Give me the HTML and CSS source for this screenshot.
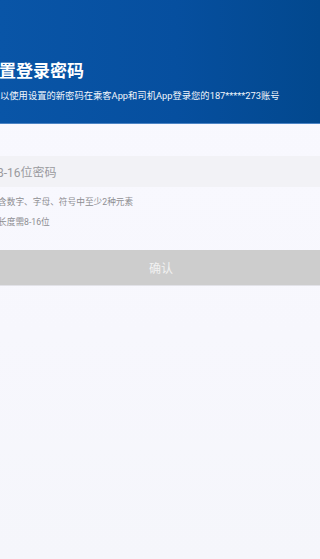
FILE: index.html
```html
<!DOCTYPE html>
<html lang="zh-CN">
<head>
<meta charset="utf-8">
<meta name="viewport" content="width=device-width, initial-scale=1">
<title>设置登录密码</title>
<link rel="stylesheet" href="styles.css">
</head>
<body>
  <div class="page">
    <header class="header">
      <h1 class="title">置登录密码</h1>
      <p class="subtitle">以使用设置的新密码在乘客App和司机App登录您的187*****273账号</p>
    </header>
    <main class="form">
      <div class="field"><span class="placeholder">8-16位密码</span></div>
      <p class="hint hint-first">含数字、字母、符号中至少2种元素</p>
      <p class="hint hint-second">长度需8-16位</p>
      <button class="confirm" type="button">确认</button>
    </main>
  </div>
</body>
</html>
```
FILE: styles.css
```css
* { box-sizing: border-box; }
html, body { margin: 0; padding: 0; }
body {
  font-family: Roboto, "Noto Sans CJK SC", sans-serif;
  background: linear-gradient(180deg, #f9f9ff 0%, #f7f7fd 60%, #f5f6fb 100%);
  min-height: 559px;
  overflow: hidden;
}
.page { width: 320px; min-height: 559px; }
.header {
  height: 124px;
  padding-top: 59px;
  background: linear-gradient(90deg, #0955a7 0%, #064f9f 55%, #02488e 100%);
  border-bottom: 1px solid #4c84c4;
  color: #fff;
}
.title {
  margin: 0 0 0 -1px;
  font-size: 17px;
  line-height: 24px;
  font-weight: 700;
  white-space: nowrap;
}
.subtitle {
  margin: 6px 0 0 0;
  font-size: 9.3px;
  line-height: 14px;
  white-space: nowrap;
  color: #f2f6fc;
}
.form { padding-top: 32px; }
.field {
  height: 31px;
  background: #f2f2f6;
  display: flex;
  align-items: center;
  overflow: hidden;
}
.placeholder {
  margin-left: -3px;
  font-size: 12px;
  color: #9a9a9e;
  white-space: nowrap;
}
.hint {
  margin: 0 0 0 -2px;
  font-size: 8.7px;
  line-height: 14px;
  color: #8e8e92;
  white-space: nowrap;
}
.hint-first { margin-top: 8px; }
.hint-second { margin-top: 6px; }
.confirm {
  display: block;
  width: 100%;
  height: 36px;
  margin-top: 21px;
  border: 0;
  border-bottom: 1px solid #e2e2e8;
  background: #cdcdcd;
  color: #f2f2f2;
  font-family: Roboto, "Noto Sans CJK SC", sans-serif;
  font-size: 12px;
  padding: 0 0 0 2px;
}
```
